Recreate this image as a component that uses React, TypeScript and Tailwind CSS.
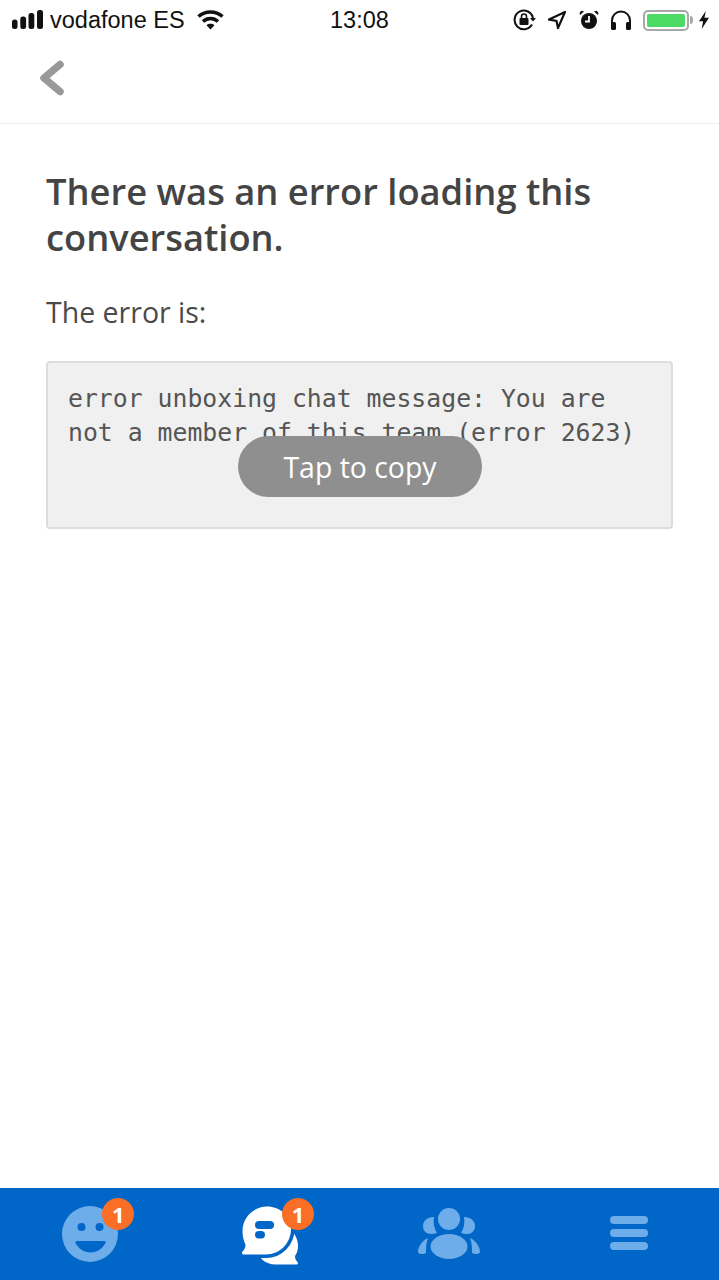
function StatusBar() {
  return (
    <div className="flex h-10 items-center pl-3 pr-[10px] text-[#111] font-['Liberation_Sans',sans-serif]">
      <div className="flex w-[318px] items-center">
        <svg width="31" height="20" viewBox="0 0 31 20" fill="#111">
          <rect x="0" y="9.500" width="5.500" height="9.500" rx="2.500" />
          <rect x="8.300" y="6.500" width="5.800" height="12.500" rx="2.500" />
          <rect x="16.500" y="3" width="5.800" height="16" rx="2.500" />
          <rect x="25" y="0" width="6" height="19" rx="2.500" />
        </svg>
        <span className="ml-[7px] pt-[2px] text-[23.500px] leading-none">vodafone ES</span>
        <svg className="ml-[12px]" width="27" height="20" viewBox="0 0 27 20" fill="none" stroke="#111" strokeWidth="3.600">
          <path d="M1.500 6.500C8.500 .5 18.500 .5 25.500 6.500" />
          <path d="M6 11.500C10.500 7.500 16.500 7.500 21 11.500" />
          <path d="M13.500 19.500L9.500 15.200C11.800 13.400 15.200 13.400 17.500 15.200Z" fill="#111" stroke="none" />
        </svg>
      </div>
      <span className="pt-[2px] text-[23.500px] font-medium leading-none">13:08</span>
      <div className="ml-auto flex items-center">
        <svg width="23" height="22" viewBox="0 0 23 22" fill="none" stroke="#111" strokeWidth="2">
          <path d="M19 15.500A9.300 9.300 0 1 1 20 9" />
          <path d="M17 9h6l-3 3.600z" fill="#111" stroke="none" />
          <rect x="6.500" y="9" width="9" height="7" rx="1" fill="#111" stroke="none" />
          <path d="M8.500 9V7.500a2.500 2.500 0 0 1 5 0V9" strokeWidth="1.600" />
        </svg>
        <svg className="ml-[12px]" width="18" height="18" viewBox="0 0 18 18" fill="none" stroke="#111" strokeWidth="2.200" strokeLinejoin="miter">
          <path d="M17 1L1 8.500l7.500 1.500L10 17z" />
        </svg>
        <svg className="ml-[13px]" width="20" height="20" viewBox="0 0 20 20" fill="#111">
          <circle cx="10" cy="11" r="8" />
          <path d="M1 5L5 1.500 2.500.8 .5 2.800zM19 5L15 1.500l2.500-.7 2 2z" />
          <path d="M10 6v5.500H6" fill="none" stroke="#fff" strokeWidth="1.800" />
        </svg>
        <svg className="ml-[11px]" width="22" height="20" viewBox="0 0 22 20" fill="none" stroke="#111" strokeWidth="2">
          <path d="M2 14V10.500a9 9 0 0 1 18 0V14" />
          <rect x="1" y="12" width="5" height="8" rx="1.500" fill="#111" stroke="none" />
          <rect x="16" y="12" width="5" height="8" rx="1.500" fill="#111" stroke="none" />
        </svg>
        <div className="ml-[11px] flex items-center">
          <div className="h-[21px] w-[46px] rounded-[5px] border-2 border-[#a8a8a8] p-[2px]">
            <div className="h-full rounded-[2px] bg-[#4cd964]" />
          </div>
          <div className="ml-[1px] h-[8px] w-[3px] rounded-r-sm bg-[#a8a8a8]" />
        </div>
        <svg className="ml-[6px]" width="10" height="20" viewBox="0 0 11 20" fill="#111">
          <path d="M7.500 0L0 11.500h4.500L3 20l8-12.500H6z" />
        </svg>
      </div>
    </div>
  );
}

function Badge() {
  return (
    <span className="absolute left-[41px] top-[-7px] flex h-8 w-8 items-center justify-center rounded-full bg-[#fa6e25] pl-[1px] text-[22px] font-bold leading-none text-white font-['Open_Sans',sans-serif]">
      1
    </span>
  );
}

function TabBar() {
  return (
    <div className="grid h-[92px] grid-cols-4 bg-[#0066c7]">
      <div className="flex justify-center pt-[17px]">
        <div className="relative h-[58px] w-[58px]">
          <svg width="58" height="58" viewBox="0 0 58 58">
            <circle cx="29" cy="29" r="28" fill="#6cadea" />
            <circle cx="20.500" cy="22" r="4" fill="#0066c7" />
            <circle cx="38.500" cy="22" r="4" fill="#0066c7" />
            <path d="M16 36h27c1.500 0 2 1 1.500 2C41 44 36 47.500 29.500 47.500S18 44 14.500 38c-.5-1 0-2 1.500-2z" fill="#0066c7" />
          </svg>
          <Badge />
        </div>
      </div>
      <div className="flex justify-center pt-[17px]">
        <div className="relative h-[60px] w-[58px]">
          <svg width="58" height="60" viewBox="0 0 58 60">
            <path d="M44 20C53 26 57 33 57 41c0 4-1 7-3 10 0 3 1 4.500 2.500 6 1 1.500.5 2.500-1 2.500H35c-6 0-11-2-15-6z" fill="#fff" />
            <path d="M26 1.500c13 0 24 9.500 24 22.500 0 14-11 25.500-25 25.500H3c-2 0-2.500-2-1.500-3 2-2 3-4 3-7C2.500 36 1.500 31 1.500 26 1.500 12 13 1.500 26 1.500z" fill="#fff" stroke="#0066c7" strokeWidth="7" paintOrder="stroke" />
            <rect x="14" y="16" width="19" height="8" rx="4" fill="#0066c7" />
            <rect x="14" y="26" width="10" height="7.500" rx="3.750" fill="#0066c7" />
          </svg>
          <Badge />
        </div>
      </div>
      <div className="flex justify-center pt-5">
        <svg width="62" height="51" viewBox="0 0 62 51" fill="#6cadea">
          <circle cx="31" cy="11" r="11" />
          <ellipse cx="31" cy="38.500" rx="18.500" ry="12.500" />
          <path d="M16 9C15 15 16 20 19 25 10 28 5 24 5 18 5 13 9 9 16 9z" />
          <path d="M46 9C47 15 46 20 43 25 52 28 57 24 57 18 57 13 53 9 46 9z" />
          <path d="M10 30C3 33 0 40 0 44c0 2 5 3 8 1C8 40 8 35 10 30z" />
          <path d="M52 30c7 3 10 10 10 14 0 2-5 3-8 1 0-5 0-10-2-15z" />
        </svg>
      </div>
      <div className="flex justify-center pt-[28px]">
        <div className="flex w-[38px] flex-col gap-[5px]">
          <div className="h-2 rounded-full bg-[#6cadea]" />
          <div className="h-2 rounded-full bg-[#6cadea]" />
          <div className="h-2 rounded-full bg-[#6cadea]" />
        </div>
      </div>
    </div>
  );
}

export default function App() {
  return (
    <div className="flex h-[1280px] flex-col bg-white font-['Open_Sans',sans-serif]">
      <StatusBar />
      <div className="flex h-[84px] items-center border-b border-[#eeeeee] pb-[7px] pl-[39px]">
        <svg width="26" height="36" viewBox="0 0 26 36" fill="none" stroke="#999999" strokeWidth="7.500" strokeLinecap="round" strokeLinejoin="round">
          <path d="M21 4.500L5 18l16 13.500" />
        </svg>
      </div>

      <main className="flex-1 px-[46px] pt-[44px]">
        <h1 className="text-[36.300px] font-semibold leading-[46px] text-[#444444]">
          There was an error loading this conversation.
        </h1>
        <p className="mt-[33px] text-[28.500px] leading-[38px] text-[#4a4a4a]">The error is:</p>

        <div className="relative mt-[30px] h-[168px] rounded-[4px] border-2 border-[#dddddd] bg-[#f0f0f0] px-5 pt-[19px]">
          <p className="text-[24.800px] leading-[34px] text-[#555555] font-['DejaVu_Sans_Mono',monospace]">
            error unboxing chat message: You are not a member of this team (error 2623)
          </p>
          <div className="absolute left-[190px] top-[73px] flex h-[61px] w-[244px] items-center justify-center rounded-full bg-[#8f8f8f] pt-[2px] text-[28.400px] text-white">
            Tap to copy
          </div>
        </div>
      </main>

      <TabBar />
    </div>
  );
}
